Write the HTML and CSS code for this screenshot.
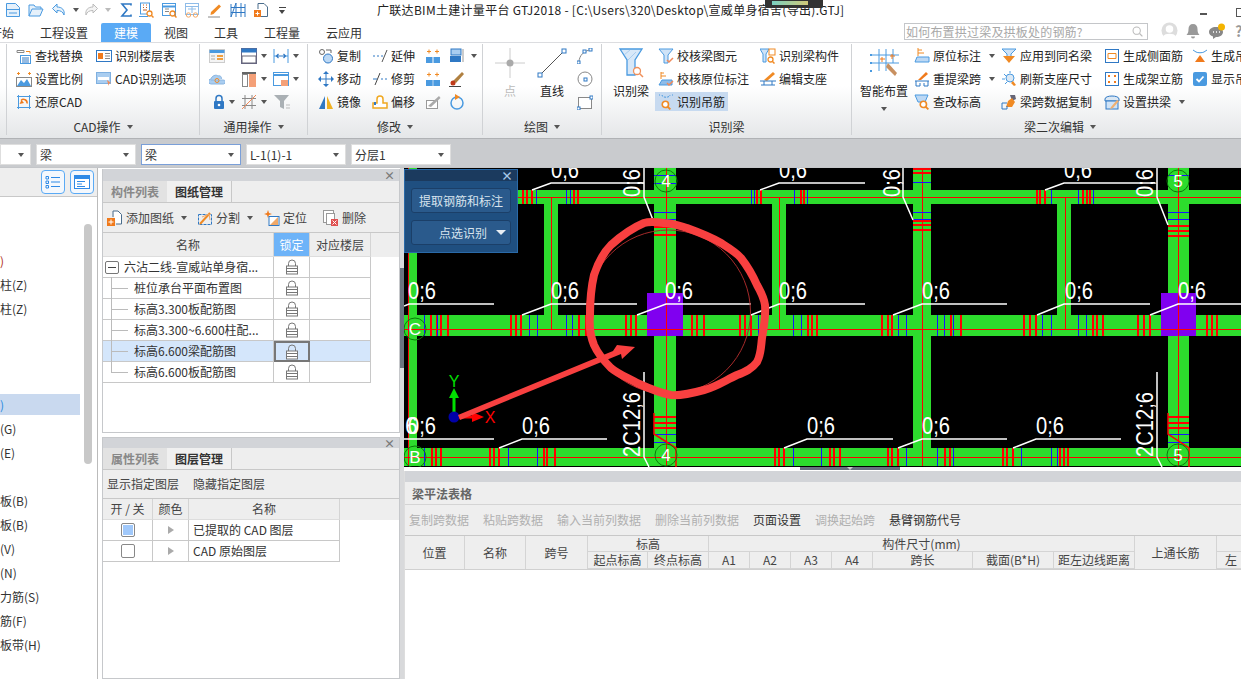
FILE: index.html
```html
<!DOCTYPE html>
<html lang="zh-CN">
<head>
<meta charset="utf-8">
<title>广联达BIM土建计量平台 GTJ2018</title>
<link rel="stylesheet" href="styles.css">
</head>
<body>
<svg class="defs" width="0" height="0">
  <symbol id="lock" viewBox="0 0 16 16"><path d="M4.500 7V4.500a3.500 3.500 0 0 1 7 0V7" fill="none" stroke="#777"/><rect x="2.500" y="7" width="11" height="8" fill="#fff" stroke="#777"/><path d="M3 9.500h10M3 12.500h10" stroke="#777"/></symbol>
  <symbol id="mag" viewBox="0 0 8 8"><circle cx="3.500" cy="3.500" r="2.500" fill="#fff" stroke="#f08a24" stroke-width="1.300"/><path d="M5.500 5.500 7.500 7.500" stroke="#f08a24" stroke-width="1.500"/></symbol>
</svg>
<div class="app">
  <header class="titlebar">
    <div class="quick">
      <span class="q"><svg class="i" viewBox="0 0 16 16"><path d="M1.500 1.500h9l4 4v9h-13z" fill="#e6f1fb" stroke="#4a9ae0"/><path d="M1.500 7.500h13M4 11h8" stroke="#4a9ae0"/></svg></span>
      <span class="q"><svg class="i" viewBox="0 0 16 16"><path d="M1 14V3h5l1.500 2H13v2" fill="#e6f1fb" stroke="#4a9ae0"/><path d="M1 14l3-7h11l-3 7z" fill="#e6f1fb" stroke="#4a9ae0"/></svg></span>
      <span class="q w32"><svg class="i" viewBox="0 0 16 16"><path d="M6 2 1.500 6.500 6 11V8.500c4 0 6 1.500 7 4.500 1-5-2-8-7-8z" fill="#e6f1fb" stroke="#4a9ae0"/></svg><i class="caret"></i></span>
      <span class="q w35"><svg class="i" viewBox="0 0 16 16"><path d="M10 2l4.500 4.500L10 11V8.500c-4 0-6 1.500-7 4.500-1-5 2-8 7-8z" fill="#f4f4f4" stroke="#bbb"/></svg><i class="caret light"></i></span>
      <span class="q w20"><svg class="i" viewBox="0 0 16 16"><path d="M13 3.500V2H4l5 6-5 6h9v-1.500" fill="none" stroke="#2f78c4" stroke-width="1.600"/></svg></span>
      <span class="q"><svg class="i" viewBox="0 0 16 16"><rect x="2.500" y="1" width="9" height="11" fill="#fff" stroke="#4a9ae0"/><path d="M5 3h1M8 3h1M5 5.500h1M8 5.500h1M5 8h4" stroke="#c05a20"/><path d="M1 14.500h9" stroke="#4a9ae0"/><use href="#mag" x="8" y="8" width="8" height="8"/></svg></span>
      <span class="q"><svg class="i" viewBox="0 0 16 16"><rect x="1.500" y="1.500" width="13" height="12" fill="#fff" stroke="#4a9ae0"/><path d="M1.500 4.500h13" stroke="#4a9ae0" stroke-width="2"/><path d="M4 7h4M4 9.500h4" stroke="#888"/><use href="#mag" x="8" y="8" width="8" height="8"/></svg></span>
      <span class="q"><svg class="i" viewBox="0 0 16 16"><rect x="1.500" y="1.500" width="13" height="11" fill="#fff" stroke="#8fbce8"/><path d="M1.500 4.500h13M4 7h8M8 5v6" stroke="#8fbce8"/><circle cx="4.500" cy="13" r="2.200" fill="none" stroke="#f0a868"/><circle cx="11.500" cy="13" r="2.200" fill="none" stroke="#f0a868"/></svg></span>
      <span class="q"><svg class="i" viewBox="0 0 16 16"><path d="M4 10 12 2.500l2 2L6.500 12 3.500 13z" fill="#f08a24"/><path d="M1 15h12" stroke="#888"/></svg></span>
      <span class="q"><svg class="i" viewBox="0 0 16 16"><path d="M1 2v13M6 1v14M11 1v14M15 2v13M1 5.500h14M1 10.500h14M1 15l5-14" fill="none" stroke="#2f78c4"/></svg></span>
      <span class="q"><svg class="i" viewBox="0 0 16 16"><path d="M5 1.500h6l3.500 3.500v9.500H8" fill="#fff" stroke="#4a6d8c"/><path d="M5 1.500V7" stroke="#4a6d8c"/><rect x="1" y="8" width="7" height="7" fill="#f07a1c"/><path d="M4.500 9.500v4M2.500 11.500h4" stroke="#fff"/></svg></span>
      <span class="q w20 more"><i class="dash"></i><i class="caret dark"></i></span>
    </div>
    <div class="apptitle">广联达BIM土建计量平台 GTJ2018 - [C:\Users\320\Desktop\宣威单身宿舍(导出).GTJ]</div>
    <div class="winctl"><i class="win-min"></i><i class="win-max"></i></div>
    <div class="thumb"><i></i></div>
  </header>

  <nav class="tabbar">
    <span class="tab first">开始</span>
    <span class="tab">工程设置</span>
    <span class="tab on">建模</span>
    <span class="tab">视图</span>
    <span class="tab">工具</span>
    <span class="tab">工程量</span>
    <span class="tab">云应用</span>
    <div class="search"><span class="ph">如何布置拱过梁及拱板处的钢筋?</span><svg class="i" viewBox="0 0 16 16"><circle cx="7" cy="7" r="4.500" fill="none" stroke="#bbb" stroke-width="1.300"/><path d="M10.500 10.500 14 14" stroke="#bbb" stroke-width="1.500"/></svg></div>
    <div class="user">
      <svg class="avatar" viewBox="0 0 18 18"><circle cx="9" cy="9" r="8.500" fill="#ddd"/><circle cx="9" cy="7.500" r="4" fill="#fff"/><path d="M2.500 15c1-3.500 12-3.500 13 0a8 8 0 0 1-13 0z" fill="#fff"/></svg>
      <svg class="i" viewBox="0 0 16 16"><path d="M8 1c3 0 4.500 2 4.500 5s.5 4.500 2 6h-13c1.500-1.500 2-3 2-6S5 1 8 1zM6 13.500h4a2 2 0 0 1-4 0z" fill="#999"/></svg>
      <svg class="chat" viewBox="0 0 18 16"><path d="M8 4c4 0 7 2 7 5s-3 5-7 5l-3 2v-2.500C2.500 12.500 1 11 1 9c0-3 3-5 7-5z" fill="#888"/><path d="M5 9h1M8 9h1M11 9h1" stroke="#fff" stroke-width="1.500"/><circle cx="13.500" cy="4" r="3.500" fill="#f4b400"/></svg>
      <span class="help">?</span><i class="caret light"></i>
    </div>
  </nav>

  <section class="ribbon">
    <div class="group g0"></div>

    <div class="group g1">
      <div class="rows">
        <div class="it"><svg class="i" viewBox="0 0 16 16"><path d="M1 2.500h7v2H1z" fill="#fff" stroke="#888"/><path d="M10 3.500h4v2" fill="none" stroke="#f08a24"/><rect x="4.500" y="7.500" width="10" height="8" fill="#fff" stroke="#4a9ae0"/><path d="M6 10h7M6 12h7M6 14h7" stroke="#2f78c4"/></svg>查找替换</div>
        <div class="it"><svg class="i" viewBox="0 0 16 16"><path d="M4 2.500h-3M12 2.500h3M2.500 1v3M13.500 1v3" stroke="#f08a24"/><rect x=".5" y="6.500" width="15" height="9" fill="#fff" stroke="#888"/><path d="M1 15l4-6 3 3 3-4 4 7z" fill="#4a9ae0"/></svg>设置比例</div>
        <div class="it"><svg class="i" viewBox="0 0 16 16"><path d="M2.500 1v14M13.500 1v14M1 2.500h14M1 13.500h14" stroke="#4a9ae0"/><path d="M11 9.500A3.500 3.500 0 0 0 5 6.500" fill="none" stroke="#f07a1c" stroke-width="1.500"/><path d="M3.500 10l2-4 2.500 3z" fill="#f07a1c"/></svg>还原CAD</div>
        <div class="it"><svg class="i" viewBox="0 0 16 16"><rect x=".5" y="2.500" width="15" height="11" fill="#fff" stroke="#2f78c4"/><rect x="2" y="5" width="5" height="6" fill="#f07a1c"/><path d="M9 5.500h5M9 8h5M9 10.500h5" stroke="#888"/></svg>识别楼层表</div>
        <div class="it"><svg class="i" viewBox="0 0 16 16"><rect x=".5" y="1.500" width="14" height="11" fill="#a9cdf0" stroke="#7fb0e0"/><path d="M2 7.500h11" stroke="#fff" stroke-width="3"/><path d="M11 9l4 3-2 .5-.5 2.500z" fill="#f08a5a"/></svg>CAD识别选项</div>
      </div>
      <div class="glabel">CAD操作<i class="caret"></i></div>
    </div>

    <div class="group g2">
      <div class="rows">
        <div class="it"><svg class="i" viewBox="0 0 16 16"><rect x=".5" y="1.500" width="15" height="13" fill="#f4f4f4" stroke="#ccc"/><path d="M.5 3.500h15" stroke="#4a9ae0" stroke-width="3"/><path d="M8 8h6M8 11h6" stroke="#f0a040" stroke-width="2"/><path d="M2 8h4M2 11h4" stroke="#aaa"/></svg></div>
        <div class="it"><svg class="i" viewBox="0 0 16 16"><path d="M2 9h12a2 2 0 0 1 .5 4H2A2.500 2.500 0 0 1 2 8c.5-3 5-5 7-3 2-1 4 1 3.500 3" fill="#a9cdf0" stroke="#8ab5e0"/><circle cx="8" cy="9.500" r="2" fill="none" stroke="#f08a24"/></svg></div>
        <div class="it inset"><svg class="i lockbig" viewBox="0 0 12 16"><path d="M3 7V4.500a3 3 0 0 1 6 0V7" fill="none" stroke="#2f78c4" stroke-width="1.500"/><rect x="1" y="7" width="10" height="8" rx="1" fill="#2f78c4"/><circle cx="6" cy="11" r="1.300" fill="#fff"/></svg><i class="caret"></i></div>
        <div class="it"><svg class="i" viewBox="0 0 16 16"><rect x=".5" y=".5" width="15" height="15" fill="#fff" stroke="#668"/><path d="M.5 2.500h15" stroke="#2f78c4" stroke-width="4"/><rect x="1" y="8" width="14" height="7" fill="#fff" stroke="#667"/></svg><i class="caret"></i></div>
        <div class="it"><svg class="i" viewBox="0 0 16 16"><rect x="1" y="1" width="14" height="2" fill="#666"/><rect x="1.500" y="3.500" width="5" height="12" fill="#fff" stroke="#888"/><rect x="8" y="3" width="7" height="13" fill="#f4a078"/></svg><i class="caret"></i></div>
        <div class="it"><svg class="i" viewBox="0 0 16 16"><path d="M4 1v14M11 1v14M1 4.500h14M1 11.500h14" stroke="#888"/><path d="M1 15 15 1" stroke="#f08a5a"/></svg><i class="caret"></i></div>
        <div class="it"><svg class="i" viewBox="0 0 16 16"><path d="M1 1v14M15 1v14M1 8h4M11 8h4" stroke="#4a9ae0"/><path d="M4 8h8M5.500 6 3.500 8l2 2M10.500 6l2 2-2 2" fill="none" stroke="#2f78c4" stroke-width="1.200"/></svg><i class="caret"></i></div>
        <div class="it"><svg class="i" viewBox="0 0 16 16"><rect x=".5" y="1.500" width="15" height="13" fill="#fff" stroke="#4a9ae0"/><path d="M.5 4h15" stroke="#4a9ae0" stroke-width="2"/><rect x="8" y="9" width="7" height="6" fill="#f4a078"/></svg><i class="caret"></i></div>
        <div class="it"><svg class="funnel" viewBox="0 0 18 16"><path d="M1 1h15l-5 6v8l-4-2V7z" fill="#aab0b4"/><path d="M13 11h4M13 14h4" stroke="#bbb"/></svg></div>
      </div>
      <div class="glabel">通用操作<i class="caret"></i></div>
    </div>

    <div class="group g3">
      <div class="rows">
        <div class="it"><svg class="i" viewBox="0 0 16 16"><circle cx="4" cy="4" r="2.500" fill="#fff" stroke="#666"/><circle cx="10" cy="10.500" r="4.500" fill="#bcd8f4" stroke="#2f78c4"/><path d="M8 2h5v3" fill="none" stroke="#666"/></svg>复制</div>
        <div class="it"><svg class="i" viewBox="0 0 16 16"><path d="M8 1v14M1 8h14" stroke="#2f78c4"/><path d="M8 0l3 3H5zM8 16l-3-3h6zM0 8l3-3v6zM16 8l-3 3V5z" fill="#2f78c4"/></svg>移动</div>
        <div class="it"><svg class="i" viewBox="0 0 16 16"><path d="M7 2v13H1z" fill="#2f78c4"/><path d="M9 2v13h6z" fill="#f0b020"/></svg>镜像</div>
        <div class="it"><svg class="i" viewBox="0 0 16 16"><path d="M1 8h2M5 8h2M9 8h2" stroke="#2f78c4"/><path d="M10 14 15 2" stroke="#555"/></svg>延伸</div>
        <div class="it"><svg class="i" viewBox="0 0 16 16"><path d="M1 8h4M9 8h2M13 8h2" stroke="#2f78c4"/><path d="M3 14 8 2" stroke="#444"/></svg>修剪</div>
        <div class="it"><svg class="i" viewBox="0 0 16 16"><path d="M1 14V9h4V5a3 3 0 0 1 6 0v4h4v5z" fill="#fff" stroke="#f0a820" stroke-width="1.500"/><path d="M3 11V8" stroke="#2f78c4" stroke-width="2"/></svg>偏移</div>
        <div class="it"><svg class="i" viewBox="0 0 16 16"><path d="M4 1.500v4M2 3.500h4M12 1.500v4M10 3.500h4" stroke="#f08a24"/><rect x="1" y="9" width="6.500" height="6" fill="#4a9ae0"/><rect x="8.500" y="9" width="6.500" height="6" fill="#4a9ae0"/></svg></div>
        <div class="it"><svg class="i" viewBox="0 0 16 16"><path d="M4 1.500v4M2 3.500h4M12 1.500v4M10 3.500h4" stroke="#f08a24"/><rect x="1" y="9" width="14" height="6" fill="#4a9ae0"/><path d="M8 9v6" stroke="#bcd8f4"/></svg></div>
        <div class="it"><svg class="i" viewBox="0 0 16 16"><rect x="1.500" y="6.500" width="11" height="8" fill="#fff" stroke="#999"/><path d="M3 12 14 2l1.500 2L6 13z" fill="#aaa"/></svg></div>
        <div class="it"><svg class="i" viewBox="0 0 16 16"><rect x="2" y="1" width="10" height="6" fill="#a9cdf0" stroke="#2f78c4"/><rect x="1" y="8" width="11" height="6" fill="#2f78c4"/><path d="M14 1v13" stroke="#999"/></svg><i class="caret"></i></div>
        <div class="it"><svg class="i" viewBox="0 0 16 16"><path d="M13 1l2 2-8 9-3-2z" fill="#b08040"/><circle cx="4" cy="12" r="2.500" fill="#c03a1a"/><path d="M0 15.500h12" stroke="#444"/></svg></div>
        <div class="it"><svg class="i" viewBox="0 0 16 16"><circle cx="8" cy="9" r="6" fill="none" stroke="#4a9ae0" stroke-width="1.500"/><path d="M6 0l5 3-5 3z" fill="#f08a24"/></svg></div>
      </div>
      <div class="glabel">修改<i class="caret"></i></div>
    </div>

    <div class="group g4">
      <div class="g4-body">
        <div class="big dim"><svg class="big-i" viewBox="0 0 30 30"><path d="M15 0v30M0 15h30" stroke="#ccc"/><circle cx="15" cy="15" r="3.500" fill="#aaa"/></svg><span>点</span></div>
        <div class="big"><svg class="big-i" viewBox="0 0 30 30"><path d="M3 27 27 3" stroke="#555"/><rect x="1" y="25" width="4" height="4" fill="#fff" stroke="#2f78c4"/><rect x="25" y="1" width="4" height="4" fill="#fff" stroke="#2f78c4"/></svg><span>直线</span></div>
        <div class="rows single">
          <div class="it"><svg class="i" viewBox="0 0 16 16"><path d="M2 14C2 8 7 2 14 2" fill="none" stroke="#888"/><rect x="12" y="0" width="3" height="3" fill="#fff" stroke="#2f78c4"/><rect x="6" y="2" width="3" height="3" fill="#fff" stroke="#2f78c4"/><rect x="0" y="13" width="3" height="3" fill="#fff" stroke="#2f78c4"/></svg></div>
          <div class="it"><svg class="i" viewBox="0 0 16 16"><circle cx="8" cy="8" r="7" fill="#fff" stroke="#888"/><rect x="7" y="7" width="3" height="3" fill="#fff" stroke="#2f78c4"/></svg></div>
          <div class="it"><svg class="i" viewBox="0 0 16 16"><rect x="1.500" y="3.500" width="13" height="11" fill="#fff" stroke="#888"/><rect x="0" y="13" width="3" height="3" fill="#fff" stroke="#2f78c4"/><rect x="13" y="2" width="3" height="3" fill="#fff" stroke="#2f78c4"/></svg></div>
        </div>
      </div>
      <div class="glabel">绘图<i class="caret"></i></div>
    </div>

    <div class="group g5">
      <div class="g5-body">
        <div class="big w36"><svg class="big-i" viewBox="0 0 30 30"><path d="M4 1h22l-7 11v15h-8V12z" fill="#d8e8f8" stroke="#4a9ae0" stroke-width="1.300"/><path d="M8 7l6-5M12 12l8-8" stroke="#a9cdf0"/><circle cx="21" cy="23" r="3.500" fill="#fff" stroke="#f0905a" stroke-width="1.300"/><path d="M23.500 25.500 27 29" stroke="#f0905a" stroke-width="1.500"/></svg><span>识别梁</span></div>
        <div class="rows five">
          <div class="it"><svg class="i" viewBox="0 0 16 16"><path d="M1 1h14l-5 6v8H6V7z" fill="#cfe3f7" stroke="#4a9ae0"/><path d="M9 12l2 2 4-4" fill="none" stroke="#f08a5a" stroke-width="1.500"/></svg>校核梁图元</div>
          <div class="it"><svg class="i" viewBox="0 0 16 16"><path d="M3 1v7M3 2h3M3 5h5" stroke="#f08a24"/><path d="M1 14l3-5h10v5z" fill="#8fbce8" stroke="#4a9ae0"/><path d="M9 12l2 2 4-4" fill="none" stroke="#f08a5a" stroke-width="1.500"/></svg>校核原位标注</div>
          <div class="it sel"><svg class="i" viewBox="0 0 16 16"><path d="M1 1h1M4 1c0 3 8 3 8 0M14 1h1" fill="none" stroke="#4a9ae0" stroke-dasharray="2 1"/><use href="#mag" x="3" y="6" width="10" height="10"/></svg>识别吊筋</div>
          <div class="it"><svg class="i" viewBox="0 0 16 16"><path d="M0 1h9l-3 5v8H3V6z" fill="#cfe3f7" stroke="#4a9ae0"/><rect x="9" y="1" width="6" height="6" fill="#fff" stroke="#f08a24"/><use href="#mag" x="7" y="8" width="8" height="8"/></svg>识别梁构件</div>
          <div class="it"><svg class="i" viewBox="0 0 16 16"><path d="M4 9 13 1l2 2-8 7z" fill="#f08a24"/><path d="M0 10h16M1 14h14M4 10v4M12 10v4" stroke="#2f78c4"/></svg>编辑支座</div>
        </div>
      </div>
      <div class="glabel">识别梁</div>
    </div>

    <div class="group g6">
      <div class="g6-body">
        <div class="big w48"><svg class="big-i" viewBox="0 0 30 30"><path d="M10 1v22M17 1v22M24 1v14M2 7h28M2 15h28" stroke="#4a9ae0"/><path d="M1 7h2M1 15h2M1 23h2" stroke="#4a9ae0" stroke-width="2"/><path d="M19 15 28 25l-2 3-9-9z" fill="#c89060"/><path d="M13 9v5M11 11h5M23 6v5M21 8h5" stroke="#f07a1c"/></svg><span>智能布置</span><i class="caret"></i></div>
        <div class="rows six">
          <div class="it"><svg class="i" viewBox="0 0 16 16"><path d="M4 0v8M4 2h4M4 5h6" stroke="#f08a24"/><path d="M1 14l2-5h12v5z" fill="#bcd8f4" stroke="#4a9ae0"/></svg>原位标注<i class="caret"></i></div>
          <div class="it"><svg class="i" viewBox="0 0 16 16"><path d="M4 9 12 1l2 2-7 6z" fill="#f07a1c"/><path d="M1 10h14M2 10v5M14 10v5M6 12v3M10 12v3M2 15h4M10 15h4" stroke="#2f78c4" fill="none"/></svg>重提梁跨<i class="caret"></i></div>
          <div class="it"><svg class="i" viewBox="0 0 16 16"><path d="M1 1h13l-3 7H4z" fill="#bcd8f4" stroke="#4a9ae0"/><use href="#mag" x="5" y="6" width="10" height="10"/></svg>查改标高</div>
          <div class="it"><svg class="i" viewBox="0 0 16 16"><path d="M1 1h14l-5 5v3H6V6z" fill="#cfe3f7" stroke="#4a9ae0"/><path d="M2 8h12l-6 7z" fill="#f08a24"/></svg>应用到同名梁</div>
          <div class="it"><svg class="i" viewBox="0 0 16 16"><circle cx="9" cy="7" r="4" fill="#dbe8f4" stroke="#4a9ae0"/><path d="M9 0v2M3 3l2 2M1 8h3M4 13l2-2" stroke="#4a9ae0"/><path d="M12 10l3 4-2 1-3-3z" fill="#f08a24"/></svg>刷新支座尺寸</div>
          <div class="it"><svg class="i" viewBox="0 0 16 16"><path d="M9 1h5l1 4-4 2z" fill="#667"/><path d="M7 7l4-3 3 4-3 5H5z" fill="#f08a24"/><path d="M1 9h5M1 9v6M6 12v3M1 15h5" stroke="#2f78c4" fill="none"/></svg>梁跨数据复制</div>
          <div class="it"><svg class="i" viewBox="0 0 16 16"><rect x="1.500" y="1.500" width="13" height="13" fill="#fff" stroke="#2f78c4"/><path d="M4 5.500h8M4 10.500h8M4 5.500v5M12 5.500v5" stroke="#f08a24" fill="none"/></svg>生成侧面筋</div>
          <div class="it"><svg class="i" viewBox="0 0 16 16"><rect x="1.500" y="1.500" width="13" height="13" fill="#fff" stroke="#2f78c4"/><path d="M4 4h2v2H4zM10 4h2v2h-2zM4 10h2v2H4zM10 10h2v2h-2z" fill="#f07a1c"/></svg>生成架立筋</div>
          <div class="it"><svg class="i" viewBox="0 0 16 16"><path d="M1 5C1 1 15 1 15 5v2H1z" fill="#dbe8f4" stroke="#2f78c4"/><rect x="2" y="7" width="12" height="8" fill="#cfe3f7" stroke="#2f78c4"/><path d="M7 13l6-7 2 1-6 7-3 1z" fill="#f0b070"/></svg>设置拱梁<i class="caret"></i></div>
          <div class="it"><svg class="i" viewBox="0 0 16 16"><path d="M1 2l3 2c2 1 6 1 8 0l3-2" fill="none" stroke="#4a9ae0"/><path d="M8 7l5 7H3z" fill="#f07a1c"/></svg>生成吊筋</div>
          <div class="it"><svg class="i" viewBox="0 0 16 16"><rect x="1" y="1" width="14" height="14" rx="2" fill="#4a9ae0"/><path d="M4.500 8l2.500 2.500 4.500-5" fill="none" stroke="#fff" stroke-width="1.800"/></svg>显示吊筋</div>
        </div>
      </div>
      <div class="glabel">梁二次编辑<i class="caret"></i></div>
    </div>
  </section>

  <div class="optbar">
    <div class="combo cut"><i class="caret"></i></div>
    <div class="combo">梁<i class="caret"></i></div>
    <div class="combo active">梁<i class="caret"></i></div>
    <div class="combo">L-1(1)-1<i class="caret"></i></div>
    <div class="combo">分层1<i class="caret"></i></div>
  </div>

  <main class="main">
    <aside class="nav">
      <div class="nav-tools">
        <span class="navbtn"><svg class="i" viewBox="0 0 16 16"><path d="M1 2.500h2.500v2.500H1zM1 7h2.500v2.500H1zM1 11.500h2.500V14H1z" fill="none" stroke="#2f8ae6"/><path d="M6 3.500h9M6 8h9M6 12.500h9" stroke="#2f8ae6"/></svg></span>
        <span class="navbtn"><svg class="i" viewBox="0 0 16 16"><rect x=".5" y="1.500" width="15" height="13" fill="#fff" stroke="#2f8ae6"/><path d="M.5 3.500h15" stroke="#2f8ae6" stroke-width="3"/><path d="M3 7.500h8M3 10h5M3 12.500h8" stroke="#2f8ae6"/></svg></span>
      </div>
      <div class="nav-body">
        <ul class="nav-list">
          <li></li><li></li><li><span class="mark-red">)</span></li><li>柱(Z)</li><li>柱(Z)</li><li></li><li></li><li></li>
          <li class="sel"><span class="mark-blue">)</span></li><li>(G)</li><li>(E)</li><li></li><li>板(B)</li><li>板(B)</li><li>(V)</li><li>(N)</li><li>力筋(S)</li><li>筋(F)</li><li>板带(H)</li>
        </ul>
        <div class="nav-scroll"></div>
      </div>
    </aside>

    <div class="mid">
      <section class="panel p-top">
        <div class="phead"><span class="pclose">×</span></div>
        <div class="ptabs"><span class="ptab">构件列表</span><span class="ptab on">图纸管理</span></div>
        <div class="ptools">
          <span class="pt t-add"><svg class="i" viewBox="0 0 16 16"><path d="M6 1h5l3.500 3.500V14H9" fill="#fff" stroke="#4a6d8c"/><path d="M6 1v6" stroke="#4a6d8c"/><rect x="0" y="8" width="8" height="8" fill="#f07a1c"/><path d="M4 9.500v5M1.500 12h5" stroke="#fff"/></svg>添加图纸<i class="caret"></i></span>
          <span class="pt t-split"><svg class="i" viewBox="0 0 16 16"><rect x="1.500" y="4.500" width="13" height="10" fill="none" stroke="#2f78c4" stroke-dasharray="3 1"/><path d="M3 14 13 3" stroke="#f08a24" stroke-width="2"/><path d="M5 7l7-3 1 6" fill="none" stroke="#f0a868"/></svg>分割<i class="caret"></i></span>
          <span class="pt t-loc"><svg class="i" viewBox="0 0 16 16"><path d="M4 0l1 3 3 1-3 1-1 3-1-3-3-1 3-1z" fill="#f07a1c"/><rect x="5" y="6.500" width="10" height="9" fill="#fff" stroke="#2f78c4"/><path d="M6 15l8-8v8z" fill="#f0a868"/></svg>定位</span>
          <span class="pt"><svg class="i" viewBox="0 0 16 16"><rect x=".5" y=".5" width="10" height="12" fill="#fff" stroke="#999"/><rect x="3.500" y="3.500" width="8" height="11" fill="#fff" stroke="#999"/><rect x="8" y="9" width="7" height="7" fill="#e05050"/><path d="M9.500 10.500l4 4M13.500 10.500l-4 4" stroke="#fff"/></svg>删除</span>
        </div>
        <div class="thead tree-cols">
          <div class="th">名称</div><div class="th lockh">锁定</div><div class="th">对应楼层</div>
        </div>
        <div class="tbody tree-cols">
          <div class="td name root"><i class="toggle"></i>六沾二线-宣威站单身宿...</div><div class="td ctr"><svg class="i"><use href="#lock"/></svg></div><div class="td"></div>
          <div class="td name child">桩位承台平面布置图</div><div class="td ctr"><svg class="i"><use href="#lock"/></svg></div><div class="td"></div>
          <div class="td name child">标高3.300板配筋图</div><div class="td ctr"><svg class="i"><use href="#lock"/></svg></div><div class="td"></div>
          <div class="td name child">标高3.300~6.600柱配...</div><div class="td ctr"><svg class="i"><use href="#lock"/></svg></div><div class="td"></div>
          <div class="td name child hl">标高6.600梁配筋图</div><div class="td ctr hl focus"><svg class="i"><use href="#lock"/></svg></div><div class="td hl"></div>
          <div class="td name child last">标高6.600板配筋图</div><div class="td ctr"><svg class="i"><use href="#lock"/></svg></div><div class="td"></div>
        </div>
      </section>

      <section class="panel p-bot">
        <div class="phead"><span class="pclose">×</span></div>
        <div class="ptabs"><span class="ptab">属性列表</span><span class="ptab on">图层管理</span></div>
        <div class="ptools plain"><span class="pt">显示指定图层</span><span class="pt">隐藏指定图层</span></div>
        <div class="thead layer-cols">
          <div class="th">开 / 关</div><div class="th">颜色</div><div class="th">名称</div>
        </div>
        <div class="tbody layer-cols">
          <div class="td ctr"><i class="chk on"></i></div><div class="td ctr"><i class="tri"></i></div><div class="td txt">已提取的 CAD 图层</div>
          <div class="td ctr"><i class="chk"></i></div><div class="td ctr"><i class="tri"></i></div><div class="td txt">CAD 原始图层</div>
        </div>
      </section>
    </div>

    <div class="splitter"><i></i></div>

    <div class="work">
      <div class="canvas">
        <svg class="cad" viewBox="404 168 837 299" width="837" height="299">
          <rect x="404" y="168" width="837" height="299" fill="#000"/>
          <g fill="#2ddc2d">
            <rect x="404" y="190" width="837" height="14"/>
            <rect x="404" y="315" width="837" height="21"/>
            <rect x="404" y="448" width="837" height="18"/>
            <rect x="408" y="168" width="9" height="298"/>
            <rect x="654" y="168" width="22" height="298"/>
            <rect x="544" y="190" width="14" height="146"/>
            <rect x="772" y="190" width="14" height="146"/>
            <rect x="913" y="168" width="18" height="298"/>
            <rect x="1057" y="190" width="14" height="146"/>
            <rect x="1168" y="168" width="21" height="298"/>
          </g>
          <path class="cl" d="M404 197H1241M404 329H1241M404 457H1241M408 168V466M666 168V466M551 197V329M779 197V329M922 168V466M1065 197V329M1178 168V466"/>
          <path class="rb" d="M431 315v21M437 315v21M441 315v21M448 315v21M511 315v21M516 315v21M521 315v21M579 315v21M586 315v21M626 315v21M631 315v21M636 315v21M692 315v21M697 315v21M704 315v21M740 315v21M745 315v21M751 315v21M808 315v21M812 315v21M817 315v21M882 315v21M888 315v21M892 315v21M951 315v21M961 315v21M1024 315v21M1030 315v21M1036 315v21M1093 315v21M1097 315v21M1103 315v21M1138 315v21M1144 315v21M1150 315v21M1207 315v21M1212 315v21M1217 315v21
            M523 190v14M527 190v14M532 190v14M574 190v14M578 190v14M757 190v14M761 190v14M801 190v14M804 190v14M1037 190v14M1040 190v14M1045 190v14M1083 190v14M1087 190v14M1090 190v14
            M432 448v18M436 448v18M441 448v18M490 448v18M494 448v18M499 448v18M544 448v18M547 448v18M555 448v18M775 448v18M779 448v18M784 448v18M830 448v18M834 448v18M840 448v18M888 448v18M892 448v18M898 448v18M945 448v18M950 448v18M1003 448v18M1007 448v18M1013 448v18M1060 448v18M1064 448v18M1068 448v18
            M654 227h22M654 235h22M654 417h22M654 423h22M654 428h22M913 169h18M913 173h18M913 221h18M913 225h18M913 230h18M1168 226h21M1168 231h21M1168 236h21M1168 417h21M1168 423h21M1168 428h21"/>
          <path class="bl" d="M424 315v21M437 315v21M529 315v21M537 315v21M566 315v21M572 315v21M758 315v21M793 315v21M801 315v21M898 315v21M906 315v21M937 315v21M944 315v21M953 315v21M1042 315v21M1051 315v21M1078 315v21M1086 315v21
            M536 190v14M566 190v14M570 190v14M751 190v14M754 190v14M794 190v14M807 190v14M1051 190v14M1078 190v14M1093 190v14
            M424 448v18M508 448v18M537 448v18M793 448v18M821 448v18M906 448v18M937 448v18M953 448v18M1021 448v18M1051 448v18M1057 448v18
            M654 175h22M654 183h22M654 212h22M654 219h22M654 434h22M654 442h22M913 182h18M913 212h18M913 219h18M1168 175h21M1168 212h21M1168 219h21M1168 434h21M1168 442h21"/>
          <path class="rd" d="M654 413V434L676 448V467M1168 413V434L1189 448V467"/>
          <rect class="ppl" x="647" y="293" width="36" height="43"/>
          <rect class="ppl" x="1161" y="293" width="35" height="43"/>
          <path class="cl" d="M666 293V336M1178 293V336M404 329H1241"/>
          <path class="ld" d="M404 306 409 304H494M522 315 551 304H637M637 315 666 304H751M751 315 779 304H865M893 315 922 304H1007M1037 315 1064 304H1150M1150 315 1178 304H1241
            M532 190 551 183H644M760 190 779 183H865M1045 190 1064 183H1155
            M404 439H494M499 448 522 439H607M784 448 807 439H893M898 448 922 439H1007M1013 448 1036 439H1121
            M644 168V197L653 220M903 168V197L913 220M1157 168V197L1168 225M644 372V457L649 467M1157 372V457L1162 467"/>
          <g class="axc"><circle cx="666" cy="181" r="11"/><circle cx="666" cy="455" r="11"/><circle cx="1178" cy="181" r="11"/><circle cx="1178" cy="455" r="11"/><circle cx="415" cy="329" r="11"/><circle cx="415" cy="457" r="11"/></g>
          <g class="axt"><text x="666" y="187">4</text><text x="666" y="461">4</text><text x="1178" y="187">5</text><text x="1178" y="461">5</text><text x="415" y="335">C</text><text x="415" y="463">B</text></g>
          <g class="dim-t">
            <text x="408" y="299" textLength="28" lengthAdjust="spacingAndGlyphs">0;6</text><text x="551" y="299" textLength="28" lengthAdjust="spacingAndGlyphs">0;6</text><text x="665" y="299" textLength="28" lengthAdjust="spacingAndGlyphs">0;6</text><text x="779" y="299" textLength="28" lengthAdjust="spacingAndGlyphs">0;6</text><text x="922" y="299" textLength="28" lengthAdjust="spacingAndGlyphs">0;6</text><text x="1065" y="299" textLength="28" lengthAdjust="spacingAndGlyphs">0;6</text><text x="1178" y="299" textLength="28" lengthAdjust="spacingAndGlyphs">0;6</text>
            <text x="551" y="178" textLength="28" lengthAdjust="spacingAndGlyphs">0;6</text><text x="779" y="178" textLength="28" lengthAdjust="spacingAndGlyphs">0;6</text><text x="1064" y="178" textLength="28" lengthAdjust="spacingAndGlyphs">0;6</text>
            <text x="408" y="434" textLength="28" lengthAdjust="spacingAndGlyphs">0;6</text><text x="405" y="434">6</text><text x="522" y="434" textLength="28" lengthAdjust="spacingAndGlyphs">0;6</text><text x="807" y="434" textLength="28" lengthAdjust="spacingAndGlyphs">0;6</text><text x="922" y="434" textLength="28" lengthAdjust="spacingAndGlyphs">0;6</text><text x="1036" y="434" textLength="28" lengthAdjust="spacingAndGlyphs">0;6</text>
            <text transform="translate(640 197) rotate(-90)" textLength="28" lengthAdjust="spacingAndGlyphs">0;6</text><text transform="translate(900 197) rotate(-90)" textLength="28" lengthAdjust="spacingAndGlyphs">0;6</text><text transform="translate(1153 197) rotate(-90)" textLength="28" lengthAdjust="spacingAndGlyphs">0;6</text>
            <text transform="translate(640 457) rotate(-90)" textLength="65" lengthAdjust="spacingAndGlyphs">2C12;6</text><text transform="translate(1153 457) rotate(-90)" textLength="65" lengthAdjust="spacingAndGlyphs">2C12;6</text>
          </g>
          <path d="M454 394V417" stroke="#00e000" stroke-width="3"/><path d="M449 398 454 388 459 398z" fill="#00e000"/>
          <text class="ax-y" x="454" y="387">Y</text>
          <path d="M454 417H476" stroke="#f00" stroke-width="3"/><path d="M472 412 484 417 472 422z" fill="#f00"/>
          <text class="ax-x" x="490" y="423">X</text>
          <circle cx="454" cy="417" r="5.500" fill="#0000a8"/>
          <circle cx="668.500" cy="312" r="82" fill="none" stroke="#a52a2a"/>
          <path class="ink" d="M644 223C650 221 657 222 664 223 672 223 680 226 687 228 698 232 711 237 721 243 729 248 736 252 741 258 748 267 753 276 757 285 761 292 764 298 765 305 766 316 764 327 762 338 761 346 761 355 757 362 752 369 745 372 737 375 726 380 716 387 704 390 693 393 682 396 671 395 659 393 648 388 637 383 628 378 618 374 611 368 604 361 598 354 594 345 590 335 589 325 590 315 590 301 591 288 594 275 598 263 603 253 611 245 621 236 632 228 644 223Z"/>
          <path class="ink-fill" d="M458 415 613 351 617 345 635 347 622 359 621 354 460 420Z"/>
        </svg>
        <div class="popup">
          <div class="pop-head"><span>×</span></div>
          <div class="pop-btn">提取钢筋和标注</div>
          <div class="pop-btn drop">点选识别<i class="caret white"></i></div>
        </div>
      </div>
      <div class="strip"><i class="grip"><b></b></i></div>
      <section class="table-panel">
        <div class="tp-head"></div>
        <div class="tp-title">梁平法表格</div>
        <div class="tp-tools">
          <span class="off">复制跨数据</span><span class="off">粘贴跨数据</span><span class="off">输入当前列数据</span><span class="off">删除当前列数据</span><span>页面设置</span><span class="off">调换起始跨</span><span>悬臂钢筋代号</span>
        </div>
        <div class="beam-head">
          <div class="bh r2">位置</div><div class="bh r2">名称</div><div class="bh r2">跨号</div>
          <div class="bh c2">标高</div><div class="bh c7">构件尺寸(mm)</div><div class="bh r2">上通长筋</div><div class="bh"></div>
          <div class="bh">起点标高</div><div class="bh">终点标高</div><div class="bh">A1</div><div class="bh">A2</div><div class="bh">A3</div><div class="bh">A4</div><div class="bh">跨长</div><div class="bh">截面(B*H)</div><div class="bh">距左边线距离</div><div class="bh lft">左</div>
        </div>
      </section>
    </div>
  </main>
</div>
</body>
</html>
```
FILE: styles.css
```css
* { box-sizing: border-box; }
html, body { margin: 0; padding: 0; }
body {
  width: 1241px; height: 679px; overflow: hidden; background: #fff; color: #222;
  font: 12px/16px "Noto Sans CJK SC", "Noto Sans", "Liberation Sans", sans-serif;
}
i { font-style: normal; display: block; }
.defs { position: absolute; }
.app { display: flex; flex-direction: column; width: 1241px; height: 679px; overflow: hidden; }
.i { width: 16px; height: 16px; flex: none; display: block; }
.caret { width: 0; height: 0; flex: none; border-left: 3.5px solid transparent; border-right: 3.5px solid transparent; border-top: 4px solid #555; }
.caret.light { border-top-color: #bbb; }
.caret.dark { border-top-color: #444; }
.caret.white { border-top-color: #e8eef4; border-left-width: 5px; border-right-width: 5px; border-top-width: 5px; }

/* title bar */
.titlebar { position: relative; height: 23px; display: flex; padding-top: 2px; flex: none; }
.quick { width: 377px; flex: none; display: flex; padding-left: 5px; }
.q { width: 23px; flex: none; display: flex; align-items: center; gap: 6px; height: 16px; }
.q.w32 { width: 32px; }
.q.w35 { width: 35px; }
.q.w20 { width: 20px; }
.q.more { flex-direction: column; justify-content: center; gap: 2px; align-items: flex-start; padding-left: 3px; }
.dash { width: 7px; height: 1px; background: #444; }
.apptitle { font-size: 12px; line-height: 16px; white-space: nowrap; color: #222; letter-spacing: .3px; }
.winctl { position: absolute; right: 0; top: 8px; display: flex; gap: 29px; align-items: center; }
.win-min { width: 7px; height: 2px; background: #555; margin-top: 3px; }
.win-max { width: 5px; height: 9px; border: 1px solid #555; border-right: 0; }
.thumb { position: absolute; left: 765px; top: 0; width: 58px; height: 8px; background: #333; border-radius: 0 0 2px 2px; padding: 1px 6px; }
.thumb i { width: 36px; height: 4px; background: linear-gradient(90deg, #7ad0c0, #d0c878); margin-left: 1px; }

/* tabs */
.tabbar { height: 19px; display: flex; flex: none; align-items: stretch; }
.tab { padding: 0 13px; line-height: 19px; color: #333; white-space: nowrap; }
.tab.first { margin-left: -23px; }
.tab.on { background: #5aaaf5; color: #fff; border-radius: 2px 2px 0 0; }
.search { margin-left: auto; width: 244px; height: 17px; margin-right: 3px; border: 1px solid #c4c6c9; display: flex; align-items: center; justify-content: space-between; padding: 0 3px 0 1px; margin-top: 0; }
.search .i { width: 13px; height: 13px; }
.ph { color: #a8a8a8; white-space: nowrap; letter-spacing: .2px; }
.user { width: 90px; flex: none; display: flex; align-items: center; padding: 0 0 2px 10px; margin-top: -2px; gap: 7px; }
.avatar { width: 17px; height: 17px; flex: none; }
.chat { width: 18px; height: 16px; flex: none; }
.help { color: #999; font-size: 15px; font-weight: 700; margin-left: 2px; }
.user .caret { margin-left: -6px; }

/* ribbon */
.ribbon { height: 97px; flex: none; display: flex; overflow: hidden; border-top: 1px solid #dcdde0; background: linear-gradient(#fff 45%, #e4e6e8); box-shadow: inset 0 -1px 0 #b0b2b5; }
.group { flex: none; display: flex; flex-direction: column; border-right: 1px solid #d0d2d5; margin: 1px 0 4px; height: 91px; }
.group > :first-child { height: 66px; flex: none; margin-top: 0; }
.g0 { width: 7px; }
.g1 { width: 193px; }
.g2 { width: 108px; }
.g3 { width: 175px; }
.g4 { width: 119px; }
.g5 { width: 250px; }
.g6 { width: 416px; border-right: 0; }
.rows { display: grid; grid-auto-flow: column; grid-template-rows: repeat(3, 23px); }
.group > .rows { height: 69px; }
.it { display: flex; align-items: center; gap: 3px; white-space: nowrap; color: #222; }
.g1 .rows { padding-left: 9px; grid-template-columns: 80px 1fr; }
.g2 .rows { padding-left: 9px; grid-template-columns: 32px 32px 32px; }
.g2 .it.inset { padding-left: 4px; }
.g2 .it { gap: 4px; }
.lockbig { width: 12px; height: 16px; }
.funnel { width: 18px; height: 16px; }
.g3 .rows { padding-left: 10px; grid-template-columns: 54px 53px 24px 1fr; }
.g3 .it .caret { margin-left: 3px; }
.glabel { height: 22px; flex: none; display: flex; align-items: center; justify-content: center; gap: 6px; color: #333; margin-top: 3px; }
.g4-body { display: flex; padding-left: 12px; gap: 12px; height: 69px !important; }
.g4-body .rows.single { margin-left: -2px; }
.big { width: 30px; display: flex; flex-direction: column; align-items: center; flex: none; padding-top: 4px; }
.big-i { width: 30px; height: 30px; display: block; flex: none; }
.big span { margin-top: 4px; white-space: nowrap; line-height: 18px; }
.big.dim span { color: #bbb; }
.big .caret { margin-top: 7px; }
.big.w36 { width: 36px; }
.big.w48 { width: 48px; }
.g5-body { display: flex; padding-left: 11px; height: 69px !important; }
.rows.five { margin-left: 9px; grid-template-columns: 102px 1fr; }
.it.sel { background: #c7daf0; height: 19px; margin: 2px 0 2px -3px; padding: 0 3px; justify-self: start; }
.g6-body { display: flex; padding-left: 8px; height: 69px !important; }
.rows.six { margin-left: 6px; grid-template-columns: 87px 103px 88px 1fr; }
.rows.six .caret { margin-left: 5px; }

/* option bar */
.optbar { height: 29px; flex: none; background: #c9cbce; display: flex; gap: 5px; padding-top: 5px; }
.combo { width: 100px; height: 21px; flex: none; background: #fff; border: 1px solid #dedede; display: flex; align-items: center; justify-content: space-between; padding: 0 6px 0 3px; color: #333; }
.combo.cut { width: 31px; justify-content: flex-end; }
.combo.active { border-color: #7a9fd8; }

/* main */
.main { flex: 1; min-height: 0; display: flex; border-top: 1px solid #c4c6c9; margin-top: -1px; }
.nav { width: 98px; flex: none; border-right: 1px solid #bbb; background: #fff; display: flex; flex-direction: column; }
.nav-tools { height: 29px; flex: none; background: #eee; border-bottom: 1px solid #c8c8c8; display: flex; justify-content: flex-end; gap: 5px; padding: 2px 3px 0 0; }
.navbtn { width: 24px; height: 24px; border: 1px solid #5aaaf5; border-radius: 4px; background: #f4f8fd; display: flex; align-items: center; justify-content: center; }
.nav-body { display: flex; flex: 1; min-height: 0; overflow: hidden; }
.nav-list { list-style: none; margin: 0; padding: 5px 0 0; width: 80px; flex: none; }
.nav-list li { height: 21px; margin-bottom: 3px; line-height: 21px; white-space: nowrap; color: #333; font-size: 12px; }
.nav-list li.sel { background: #c9d9ef; }
.mark-red { color: #b03020; }
.mark-blue { color: #2a8ae0; }
.nav-scroll { width: 8px; height: 240px; margin: 27px 0 0 4px; background: #c8c8c8; border-radius: 4px; flex: none; }

.mid { width: 302px; flex: none; display: flex; flex-direction: column; gap: 4px; padding-left: 4px; background: #fff; }
.panel { width: 298px; border: 1px solid #c6c8cb; border-top: 0; background: #fff; display: flex; flex-direction: column; }
.p-top { height: 264px; flex: none; margin-top: 1px; }
.p-bot { flex: 1; min-height: 0; border-top: 1px solid #c6c8cb; }
.phead { height: 12px; flex: none; background: #d2d4d8; display: flex; justify-content: flex-end; padding-right: 4px; }
.p-bot .phead { height: 10px; }
.p-bot .pclose { line-height: 10px; }
.pclose { font-size: 11px; line-height: 12px; color: #777; font-weight: 700; }
.ptabs { height: 22px; flex: none; background: #eeeeee; display: flex; border-bottom: 1px solid #c8c8c8; }
.ptab { width: 64px; text-align: center; line-height: 21px; color: #888; font-weight: 700; background: #e2e2e2; }
.ptab.on { width: 65px; color: #333; background: #f0f0f0; border-right: 1px solid #c8c8c8; }
.ptools { height: 30px; flex: none; background: #eee; border-bottom: 1px solid #c8c8c8; display: flex; align-items: center; padding-left: 4px; color: #444; }
.p-bot .ptools { height: 29px; }
.pt { display: flex; align-items: center; gap: 3px; white-space: nowrap; margin-right: 16px; }
.pt .caret { margin-left: 4px; }
.ptools.plain .pt { margin-right: 14px; }
.t-add { margin-right: 10px; }
.t-split { margin-right: 11px; }
.t-loc { margin-right: 16px; }
.thead { background: #eee; flex: none; }
.tree-cols { display: grid; grid-template-columns: 171px 36px 61px; grid-auto-rows: 21px; }
.thead.tree-cols { grid-auto-rows: 24px; }
.layer-cols { display: grid; grid-template-columns: 50px 36px 151px; grid-auto-rows: 21px; }
.th { border-right: 1px solid #d4d4d4; border-bottom: 1px solid #ddd; display: flex; align-items: center; justify-content: center; color: #444; }
.lockh { background: #6db3f8; color: #fff; }
.td { position: relative; border-right: 1px solid #c8c8c8; border-bottom: 1px solid #c8c8c8; display: flex; align-items: center; color: #333; white-space: nowrap; }
.ctr { justify-content: center; }
.hl { background: #d4e6fb; }
.focus { border: 2px solid #777; }
.name.root { padding-left: 2px; gap: 5px; }
.toggle { position: relative; width: 14px; height: 13px; border: 1px solid #777; border-radius: 2px; background: #fff; flex: none; }
.toggle::after { content: ""; position: absolute; left: 2px; right: 2px; top: 5px; height: 1px; background: #444; }
.name.child { padding-left: 31px; }
.name.child::before { content: ""; position: absolute; left: 8px; top: -1px; bottom: -1px; border-left: 1px solid #bbb; }
.name.child::after { content: ""; position: absolute; left: 8px; top: 10px; width: 17px; border-top: 1px solid #bbb; }
.name.child.last::before { bottom: 10px; }
.txt { padding-left: 4px; }
.chk { width: 14px; height: 14px; border: 1px solid #888; border-radius: 2px; background: #fff; }
.chk.on { background: #a0c8fa; box-shadow: inset 0 0 0 1px #fff; }
.tri { width: 0; height: 0; border-left: 6px solid #aaa; border-top: 4px solid transparent; border-bottom: 4px solid transparent; }
.splitter { width: 4px; flex: none; background: #d8d9db; padding-top: 100px; }
.splitter i { width: 4px; height: 100px; background: #6b7580; }

/* work area */
.work { flex: 1; min-width: 0; display: flex; flex-direction: column; }
.canvas { position: relative; height: 299px; flex: none; }
.cad { display: block; }
.cl { fill: none; stroke: #f00; stroke-width: 1; shape-rendering: crispEdges; }
.rb { fill: none; stroke: #f00; stroke-width: 2; shape-rendering: crispEdges; }
.bl { fill: none; stroke: #1414ff; stroke-width: 1; shape-rendering: crispEdges; }
.rd { fill: none; stroke: #f00; stroke-width: 1.500; }
.ppl { fill: #8000f0; }
.ld { fill: none; stroke: #fff; stroke-width: 1.500; }
.axc circle { fill: none; stroke: #0b7a0b; }
.axt text { fill: #fff; font: 17px "Liberation Sans", sans-serif; text-anchor: middle; }
.dim-t text { fill: #fff; font: 23px "Liberation Sans", sans-serif; }
.ax-y { fill: #00e000; font: 16px "Liberation Sans", sans-serif; text-anchor: middle; }
.ax-x { fill: #f00; font: 16px "Liberation Sans", sans-serif; text-anchor: middle; }
.ink { fill: none; stroke: #f84040; stroke-width: 8; stroke-linejoin: round; }
.ink-fill { fill: #f84040; }
.popup { position: absolute; left: 0; top: 1px; width: 114px; height: 84px; background: #1f4f80; border: 1px solid #2a6aa8; }
.pop-head { height: 11px; background: #1b3a5e; color: #a8c8e8; display: flex; justify-content: flex-end; padding-right: 4px; line-height: 11px; font-weight: 700; margin-bottom: 7px; }
.pop-btn { width: 100px; height: 25px; margin: 0 0 7px 6px; background: #2a5a8c; border: 1px solid #1b3f68; border-radius: 3px; color: #d8e4ee; display: flex; align-items: center; justify-content: center; }
.pop-btn.drop { justify-content: flex-end; gap: 9px; padding-right: 4px; }
.strip { height: 4px; flex: none; background: #fff; padding-left: 396px; }
.grip { width: 100px; height: 3px; background: #67727e; display: flex; justify-content: center; }
.grip b { width: 0; height: 0; border-left: 3px solid transparent; border-right: 3px solid transparent; border-top: 3px solid #ccc; }
.table-panel { flex: 1; min-height: 0; background: #fff; display: flex; flex-direction: column; border-left: 1px solid #ddd; }
.tp-head { height: 11px; background: #d2d4d8; flex: none; }
.tp-title { height: 23px; flex: none; background: #eee; border-bottom: 1px solid #d4d4d4; padding-left: 7px; line-height: 23px; font-weight: 700; color: #666; }
.tp-tools { height: 31px; flex: none; background: #eee; border-bottom: 1px solid #c8c8c8; display: flex; align-items: center; gap: 14px; padding-left: 4px; color: #333; white-space: nowrap; }
.tp-tools .off { color: #b0b0b0; }
.beam-head { flex: none; background: #eee; height: 34px; border-bottom: 1px solid #d0d0d0; display: grid; grid-template-columns: 60px 61px 62px 60px 61px 41px 41px 41px 41px 100px 81px 81px 82px 40px; grid-template-rows: 16px 17px; overflow: hidden; }
.bh { border-right: 1px solid #d4d4d4; border-bottom: 1px solid #d4d4d4; display: flex; align-items: center; justify-content: center; color: #444; white-space: nowrap; min-width: 0; }
.bh.r2 { grid-row: span 2; border-bottom: 0; }
.bh.c2 { grid-column: span 2; }
.bh.c7 { grid-column: span 7; }
.bh.lft { justify-content: flex-start; padding-left: 8px; }
```
